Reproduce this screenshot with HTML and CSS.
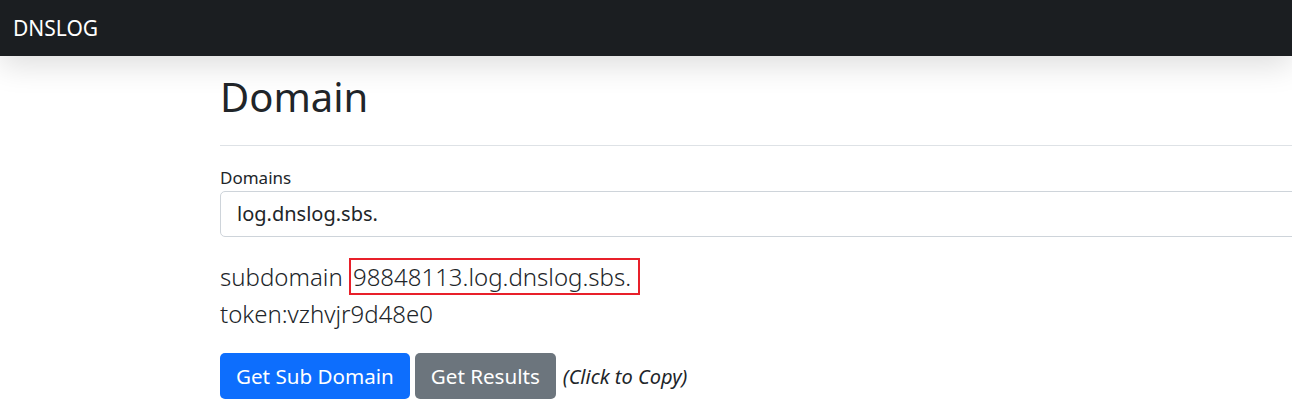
FILE: index.html
```html
<!DOCTYPE html>
<html>
<head>
<meta charset="utf-8">
<link rel="stylesheet" href="styles.css">
</head>
<body>
<nav class="navbar"><span class="brand">DNSLOG</span></nav>
<main class="container">
  <h1 class="title">Domain</h1>
  <hr class="rule">
  <label class="label">Domains</label>
  <div class="input">log.dnslog.sbs.</div>
  <div class="info">
    <div class="line">subdomain <span class="sub">98848113.log.dnslog.sbs.</span></div>
    <div class="line">token:vzhvjr9d48e0</div>
  </div>
  <div class="actions">
    <button class="btn btn-primary">Get Sub Domain</button>
    <button class="btn btn-secondary">Get Results</button>
    <em class="hint">(Click to Copy)</em>
  </div>
</main>
</body>
</html>
```
FILE: styles.css
```css
html, body { margin: 0; padding: 0; background: #fff; }
body { font-family: "Noto Sans", "Open Sans", sans-serif; color: #212529; overflow: hidden; }
.navbar { height: 56px; background: #1b1e21; display: flex; align-items: center; padding-left: 13px; box-shadow: 0 10px 30px rgba(0,0,0,.13); position: relative; z-index: 1; }
.brand { color: #fff; font-size: 21px; }
.container { padding-left: 220px; width: 1200px; }
.title { font-size: 40px; font-weight: 400; margin: 17px 0 0; line-height: 48px; }
.rule { border: 0; border-top: 1px solid #dee2e6; margin: 24px 0 21px; }
.label { display: block; font-size: 17px; line-height: 22px; margin-bottom: 2px; }
.input { height: 44px; border: 1px solid #ced4da; border-radius: 5px; font-size: 20px; line-height: 44px; padding: 0 16px; }
.info { margin-top: 21px; font-size: 24px; font-weight: 300; }
.line { line-height: 37px; }
.sub { border: 2px solid #e8202a; padding: 0 7px 0 2px; }
.actions { margin-top: 21px; display: flex; align-items: center; gap: 5px; }
.btn { font-family: inherit; font-size: 20.6px; height: 46px; padding: 0 16px; border: 0; border-radius: 5px; color: #fff; }
.btn-primary { background: #0d6efd; }
.btn-secondary { background: #6c757d; }
.hint { font-size: 20px; margin-left: 2px; }
```
